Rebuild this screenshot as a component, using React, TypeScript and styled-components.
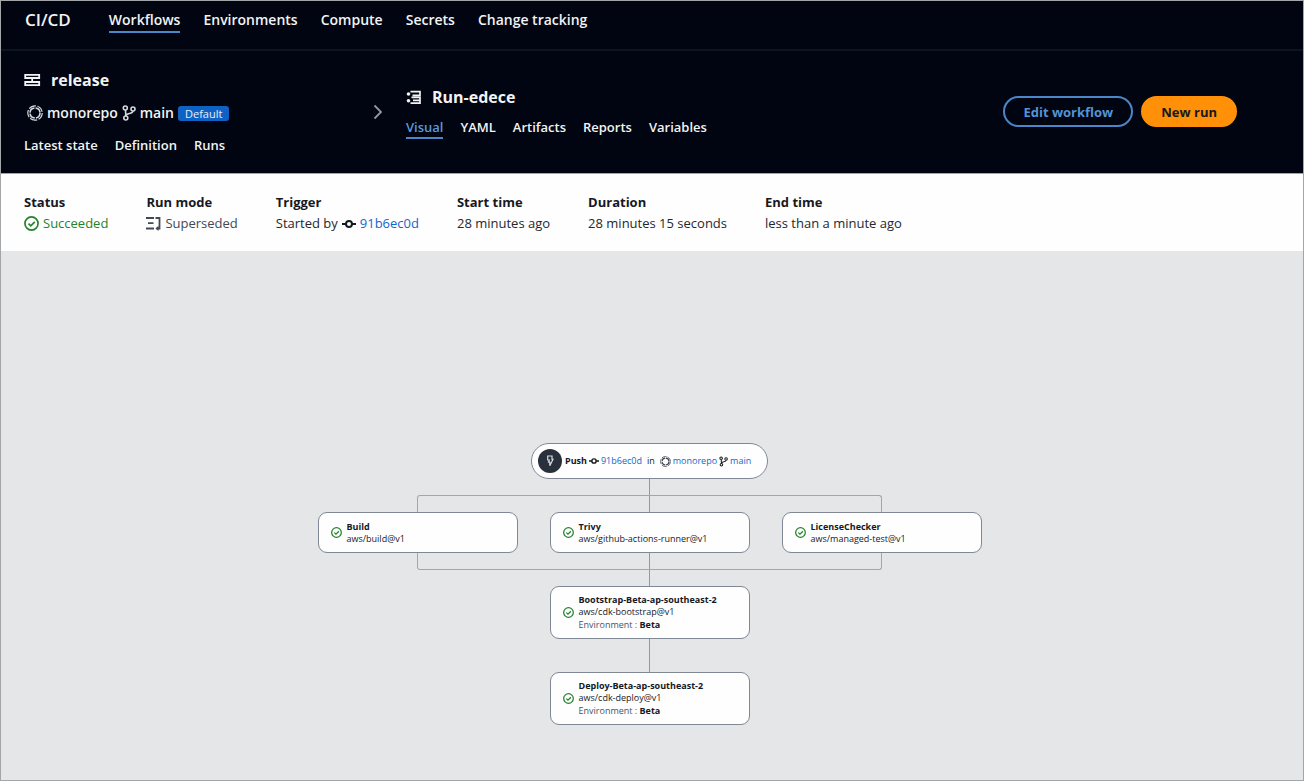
import React from 'react';
import styled, { createGlobalStyle } from 'styled-components';

const GlobalStyle = createGlobalStyle`
  *, *::before, *::after { box-sizing: border-box; }
  html { height: 100%; }
  body { margin: 0; height: 100%; font-family: "Open Sans", "Noto Sans", sans-serif; color: #16191f; }
  #root { height: 100%; }
  a { color: inherit; text-decoration: none; }
  h1, h2, p, dl, dt, dd { margin: 0; }
  svg { display: block; flex: none; }
`;

const Page = styled.div`
  display: flex;
  flex-direction: column;
  min-height: 100%;
  border: 1px solid #a3a5a8;
`;

const TopBar = styled.header`
  display: flex;
  align-items: flex-start;
  gap: 38px;
  height: 48px;
  padding: 8px 24px 0;
  background: #000511;
  color: #f2f3f3;
  line-height: 22px;
  font-weight: 600;
`;

const Brand = styled.span`
  font-size: 17px;
  white-space: nowrap;
`;

const NavList = styled.nav<{ $gap: number }>`
  display: flex;
  gap: ${(p) => p.$gap}px;
`;

const NavLink = styled.a<{ $active?: boolean }>`
  border-bottom: 2px solid ${(p) => (p.$active ? '#4a86c8' : 'transparent')};
  font-size: 14px;
  white-space: nowrap;
`;

const RunHeader = styled.section`
  display: flex;
  align-items: flex-start;
  height: 125px;
  padding: 17px 66px 0 23px;
  border-top: 2px solid #0e1420;
  border-bottom: 1px solid #a3a5a8;
  background: #000511;
  color: #f2f3f3;
`;

const WorkflowBlock = styled.div`
  display: flex;
  flex-direction: column;
  width: 343px;
`;

const Title = styled.h1`
  display: flex;
  align-items: center;
  gap: 10px;
  font-size: 16px;
  line-height: 24px;
  font-weight: 700;
`;

const SourceLine = styled.div`
  display: flex;
  align-items: center;
  gap: 4px;
  margin: 10px 0 11px 3px;
  font-size: 14px;
  line-height: 22px;
  font-weight: 600;
`;

const Badge = styled.span`
  padding: 0 7px;
  border-radius: 3px;
  background: #0f62c4;
  color: #e6effa;
  font-size: 11px;
  line-height: 15px;
  font-weight: 400;
`;

const SubNav = styled(NavList)`
  font-size: 13px;
  line-height: 20px;
  font-weight: 600;
`;

const SubLink = styled.a<{ $active?: boolean }>`
  border-bottom: 2px solid ${(p) => (p.$active ? '#4a86c8' : 'transparent')};
  color: ${(p) => (p.$active ? '#5b9ad8' : 'inherit')};
  white-space: nowrap;
`;

const Chevron = styled.div`
  width: 39px;
  padding: 36px 0 0 6px;
`;

const RunBlock = styled.div`
  display: flex;
  flex-direction: column;
  gap: 8px;
  padding-top: 17px;
`;

const Actions = styled.div`
  display: flex;
  gap: 8px;
  margin-left: auto;
  padding-top: 28px;
`;

const Button = styled.button<{ $primary?: boolean }>`
  height: 31px;
  padding: 0 18px;
  border: 2px solid ${(p) => (p.$primary ? '#ff9008' : '#4a86c8')};
  border-radius: 16px;
  background: ${(p) => (p.$primary ? '#ff9008' : 'transparent')};
  color: ${(p) => (p.$primary ? '#16191f' : '#5593d4')};
  font: 700 13px/20px "Open Sans", "Noto Sans", sans-serif;
  white-space: nowrap;
`;

const Summary = styled.dl`
  display: flex;
  align-items: flex-start;
  gap: 38px;
  height: 77px;
  padding: 18px 24px 0 23px;
  background: #fefefe;
  font-size: 13px;
  line-height: 21px;
`;

const SummaryItem = styled.div`
  white-space: nowrap;
`;

const Term = styled.dt`
  font-weight: 700;
`;

const Detail = styled.dd<{ $color?: string }>`
  display: flex;
  align-items: center;
  gap: 4px;
  color: ${(p) => p.$color ?? '#232830'};
`;

const BlueLink = styled.a`
  && { color: #1166d0; }
`;

const Canvas = styled.main`
  display: flex;
  flex: 1;
  flex-direction: column;
  align-items: center;
  padding: 192px 5px 40px 0;
  background: #e5e6e8;
  font-size: 9px;
  line-height: 12px;
`;

const Trigger = styled.div`
  display: flex;
  align-items: center;
  gap: 2px;
  width: 237px;
  height: 36px;
  padding: 0 6px;
  border: 1px solid #7f8894;
  border-radius: 18px;
  background: #fefefe;
`;

const TriggerMark = styled.span`
  display: flex;
  align-items: center;
  justify-content: center;
  width: 24px;
  height: 24px;
  margin-right: 1px;
  border-radius: 50%;
  background: #28303c;
`;

const Spaced = styled.span`
  margin: 0 3px;
`;

const Stem = styled.div<{ $height: number }>`
  width: 1px;
  height: ${(p) => p.$height}px;
  background: #8f9a9e;
`;

const Rail = styled.div<{ $side: 'top' | 'bottom' }>`
  width: 465px;
  height: 17px;
  border: 1px solid #9fa9ac;
  border-${(p) => (p.$side === 'top' ? 'bottom' : 'top')}: 0;
  border-radius: ${(p) => (p.$side === 'top' ? '3px 3px 0 0' : '0 0 3px 3px')};
  display: flex;
  justify-content: center;
`;

const Row = styled.div`
  display: flex;
  gap: 32px;
`;

const Card = styled.article<{ $tall?: boolean }>`
  display: flex;
  align-items: center;
  gap: 5px;
  width: 200px;
  height: ${(p) => (p.$tall ? 53 : 41)}px;
  padding: 0 12px;
  border: 1px solid #7f8894;
  border-radius: 9px;
  background: #fefefe;
  white-space: nowrap;
`;

const CardName = styled.h2`
  font-size: 9px;
  line-height: 12px;
  font-weight: 700;
`;

const Environment = styled.p`
  color: #4b5360;
  line-height: 13px;

  b { color: #16191f; }
`;

const WorkflowIcon = () => (
  <svg width="17" height="14" viewBox="0 0 17 14" fill="none" stroke="#f2f3f3" strokeWidth="1.800">
    <path d="M1.200 1.900h14v3.100h-14zM1.200 9h14v3.100h-14zM8.200 5v4" />
  </svg>
);

const RunIcon = () => (
  <svg width="16" height="15" viewBox="0 0 16 15" fill="none" stroke="#f2f3f3" strokeWidth="1.700">
    <circle cx="2.500" cy="4" r="1.800" fill="#f2f3f3" stroke="none" />
    <circle cx="2.500" cy="10.800" r="1.800" fill="#f2f3f3" stroke="none" />
    <path d="M4.500 1.700h9.500v3.700H6.500M5.500 7.400h8.500v5.800H4.500M7 10.300h7" />
  </svg>
);

const RepoIcon = ({ size, color }: { size: number; color: string }) => (
  <svg width={size} height={size} viewBox="0 0 16 16" fill="none" stroke={color}>
    <circle cx="8" cy="8" r="7.200" strokeWidth="1.200" strokeDasharray="7.500 1.550" />
    <circle cx="8" cy="8" r="5" strokeWidth="1.600" strokeDasharray="6.700 1.150" />
  </svg>
);

const BranchIcon = ({ size, color }: { size: number; color: string }) => (
  <svg width={size} height={size + 2} viewBox="0 0 14 16" fill="none" stroke={color} strokeWidth="1.600">
    <circle cx="3.300" cy="3" r="2" />
    <circle cx="3.800" cy="13" r="2" />
    <circle cx="11" cy="4" r="2" />
    <path d="M3.500 5l.3 6M11 6c0 3.500-7 1.500-7.200 5" />
  </svg>
);

const CommitIcon = ({ size }: { size: number }) => (
  <svg width={size} height={size} viewBox="0 0 14 14" fill="none" stroke="#16191f" strokeWidth="2">
    <circle cx="7" cy="7" r="3" />
    <path d="M0 7h4M10 7h4" />
  </svg>
);

const CheckIcon = ({ size }: { size: number }) => (
  <svg width={size} height={size} viewBox="0 0 16 16" fill="none" stroke="#238329" strokeWidth="1.800">
    <circle cx="8" cy="8" r="7" />
    <path d="M4.800 8.200l2.400 2.300 4.300-4.300" />
  </svg>
);

const SupersededIcon = () => (
  <svg width="15" height="15" viewBox="0 0 15 15" fill="none" stroke="#424956" strokeWidth="1.800">
    <path d="M0 2h8M2 7.200h5.500M0 12.500h8M9.500 2h4v10.500H10.500" />
    <path d="M12.500 9.800v5.200l-3-2.600z" fill="#424956" stroke="none" />
  </svg>
);

const BoltIcon = () => (
  <svg width="8" height="12" viewBox="0 0 8 12" fill="none" stroke="#d5dae0" strokeWidth="1.200">
    <path d="M1.700 1h4.300v3.300h1L3.800 10.800V7.200H2.500l.8-2.200H1.700z" />
  </svg>
);

const ChevronIcon = () => (
  <svg width="10" height="16" viewBox="0 0 10 16" fill="none" stroke="#9198a1" strokeWidth="1.800">
    <path d="M1.500 1.500L8 8l-6.500 6.500" />
  </svg>
);

type ActionProps = { name: string; action: string; environment?: string };

const ActionCard = ({ name, action, environment }: ActionProps) => (
  <Card $tall={Boolean(environment)}>
    <CheckIcon size={11} />
    <div>
      <CardName>{name}</CardName>
      <p>{action}</p>
      {environment && (
        <Environment>
          Environment : <b>{environment}</b>
        </Environment>
      )}
    </div>
  </Card>
);

const sections = ['Workflows', 'Environments', 'Compute', 'Secrets', 'Change tracking'];
const workflowTabs = ['Latest state', 'Definition', 'Runs'];
const runTabs = ['Visual', 'YAML', 'Artifacts', 'Reports', 'Variables'];

export default function App() {
  return (
    <>
      <GlobalStyle />
      <Page>
        <TopBar>
          <Brand>CI/CD</Brand>
          <NavList $gap={23} aria-label="CI/CD">
            {sections.map((s, i) => (
              <NavLink key={s} href="#" $active={i === 0}>{s}</NavLink>
            ))}
          </NavList>
        </TopBar>
        <RunHeader>
          <WorkflowBlock>
            <Title><WorkflowIcon />release</Title>
            <SourceLine>
              <RepoIcon size={16} color="#d5d8dc" />
              <span>monorepo</span>
              <BranchIcon size={14} color="#d5d8dc" />
              <span>main</span>
              <Badge>Default</Badge>
            </SourceLine>
            <SubNav $gap={17} aria-label="Workflow">
              {workflowTabs.map((t) => <SubLink key={t} href="#">{t}</SubLink>)}
            </SubNav>
          </WorkflowBlock>
          <Chevron><ChevronIcon /></Chevron>
          <RunBlock>
            <Title><RunIcon />Run-edece</Title>
            <SubNav $gap={17} aria-label="Run">
              {runTabs.map((t, i) => <SubLink key={t} href="#" $active={i === 0}>{t}</SubLink>)}
            </SubNav>
          </RunBlock>
          <Actions>
            <Button type="button">Edit workflow</Button>
            <Button type="button" $primary>New run</Button>
          </Actions>
        </RunHeader>
        <Summary>
          <SummaryItem>
            <Term>Status</Term>
            <Detail $color="#238329"><CheckIcon size={15} />Succeeded</Detail>
          </SummaryItem>
          <SummaryItem>
            <Term>Run mode</Term>
            <Detail $color="#424956"><SupersededIcon />Superseded</Detail>
          </SummaryItem>
          <SummaryItem>
            <Term>Trigger</Term>
            <Detail>Started by <CommitIcon size={14} /><BlueLink href="#">91b6ec0d</BlueLink></Detail>
          </SummaryItem>
          <SummaryItem>
            <Term>Start time</Term>
            <Detail>28 minutes ago</Detail>
          </SummaryItem>
          <SummaryItem>
            <Term>Duration</Term>
            <Detail>28 minutes 15 seconds</Detail>
          </SummaryItem>
          <SummaryItem>
            <Term>End time</Term>
            <Detail>less than a minute ago</Detail>
          </SummaryItem>
        </Summary>
        <Canvas>
          <Trigger>
            <TriggerMark><BoltIcon /></TriggerMark>
            <b>Push</b>
            <CommitIcon size={10} />
            <BlueLink href="#">91b6ec0d</BlueLink>
            <Spaced>in</Spaced>
            <RepoIcon size={11} color="#3c434e" />
            <BlueLink href="#">monorepo</BlueLink>
            <BranchIcon size={9} color="#16191f" />
            <BlueLink href="#">main</BlueLink>
          </Trigger>
          <Stem $height={16} />
          <Rail $side="top"><Stem $height={16} /></Rail>
          <Row>
            <ActionCard name="Build" action="aws/build@v1" />
            <ActionCard name="Trivy" action="aws/github-actions-runner@v1" />
            <ActionCard name="LicenseChecker" action="aws/managed-test@v1" />
          </Row>
          <Rail $side="bottom"><Stem $height={16} /></Rail>
          <Stem $height={16} />
          <ActionCard name="Bootstrap-Beta-ap-southeast-2" action="aws/cdk-bootstrap@v1" environment="Beta" />
          <Stem $height={33} />
          <ActionCard name="Deploy-Beta-ap-southeast-2" action="aws/cdk-deploy@v1" environment="Beta" />
        </Canvas>
      </Page>
    </>
  );
}
